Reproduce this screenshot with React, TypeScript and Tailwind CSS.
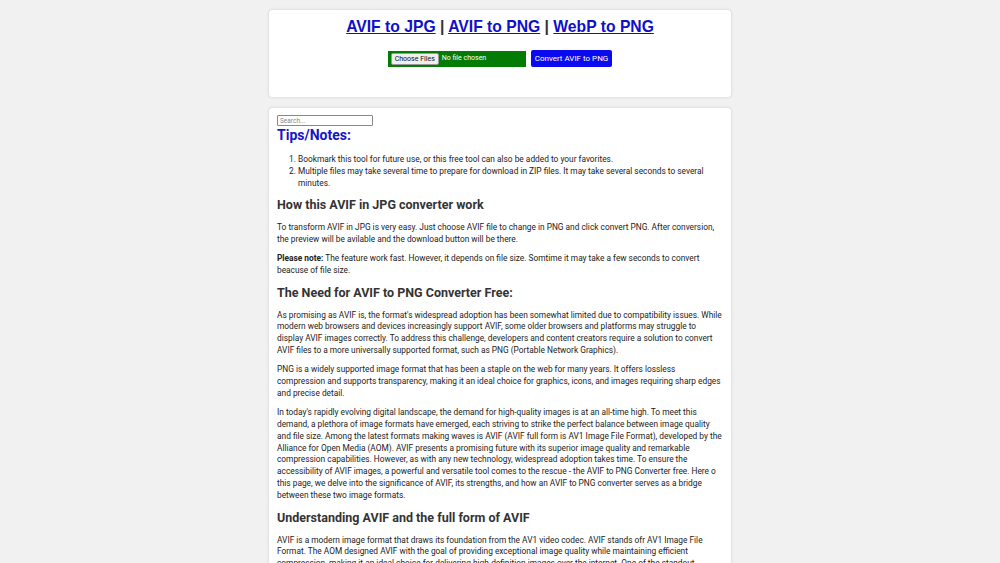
const body = "font-['Roboto',sans-serif]";

function Card({ children, className = '' }: { children: React.ReactNode; className?: string }) {
  return (
    <div className={`rounded-[4px] border border-[#e3e3e3] bg-white shadow-[0_0_3px_rgba(0,0,0,0.06)] ${className}`}>
      {children}
    </div>
  );
}

function H2({ children }: { children: React.ReactNode }) {
  return <h2 className="mt-[8px] mb-[9px] text-[12.5px] font-bold leading-[16px] text-[#333]">{children}</h2>;
}

function P({ children }: { children: React.ReactNode }) {
  return <p className="mb-[7.5px] text-[8.33px] leading-[11.8px] text-[#222]">{children}</p>;
}

export default function App() {
  return (
    <div className={`min-h-screen bg-[#f1f1f1] pt-[9px] ${body}`}>
      <div className="mx-auto flex w-[464px] flex-col gap-[9px]">
        <Card className="h-[89px] pt-[6px]">
          <h1 className="text-center font-['Liberation_Sans',Arial,sans-serif] text-[15.7px] font-bold leading-[22px] text-[#333]">
            <a href="#" className="text-[#1010c8] underline">AVIF to JPG</a>
            {' | '}
            <a href="#" className="text-[#1010c8] underline">AVIF to PNG</a>
            {' | '}
            <a href="#" className="text-[#1010c8] underline">WebP to PNG</a>
          </h1>
          <div className="mt-[12px] flex items-center justify-center gap-[5px]">
            <div className="flex h-[16px] w-[138px] items-center bg-[#047c04] pl-[3px]">
              <span className="rounded-[2px] border border-[#999] bg-[#efefef] px-[3px] text-[7px] leading-[10px] text-[#111]">
                Choose Files
              </span>
              <span className="ml-[3px] text-[7px] text-white">No file chosen</span>
            </div>
            <button className="h-[17px] rounded-[2px] bg-[#0a0af0] px-[4px] text-[8px] font-normal text-white">
              Convert AVIF to PNG
            </button>
          </div>
        </Card>

        <Card className="px-[8px] pt-[7px] pb-[10px]">
          <input
            placeholder="Search..."
            className="block h-[11px] w-[96px] rounded-[1px] border border-[#888] px-[2px] text-[6.5px] placeholder:text-[#888]"
          />
          <h3 className="mt-[1px] text-[14px] font-bold leading-[17px] text-[#1515c4]">Tips/Notes:</h3>
          <ol className="mt-[9px] mb-[8px] list-decimal pl-[21px] text-[8.33px] leading-[12px] text-[#222]">
            <li>Bookmark this tool for future use, or this free tool can also be added to your favorites.</li>
            <li>
              Multiple files may take several time to prepare for download in ZIP files. It may take several seconds to
              several minutes.
            </li>
          </ol>
          <H2>How this AVIF in JPG converter work</H2>
          <P>
            To transform AVIF in JPG is very easy. Just choose AVIF file to change in PNG and click convert PNG. After
            conversion, the preview will be avilable and the download button will be there.
          </P>
          <P>
            <strong>Please note:</strong> The feature work fast. However, it depends on file size. Somtime it may take a
            few seconds to convert beacuse of file size.
          </P>
          <H2>The Need for AVIF to PNG Converter Free:</H2>
          <P>
            As promising as AVIF is, the format's widespread adoption has been somewhat limited due to compatibility
            issues. While modern web browsers and devices increasingly support AVIF, some older browsers and platforms
            may struggle to display AVIF images correctly. To address this challenge, developers and content creators
            require a solution to convert AVIF files to a more universally supported format, such as PNG (Portable
            Network Graphics).
          </P>
          <P>
            PNG is a widely supported image format that has been a staple on the web for many years. It offers lossless
            compression and supports transparency, making it an ideal choice for graphics, icons, and images requiring
            sharp edges and precise detail.
          </P>
          <P>
            In today's rapidly evolving digital landscape, the demand for high-quality images is at an all-time high. To
            meet this demand, a plethora of image formats have emerged, each striving to strike the perfect balance
            between image quality and file size. Among the latest formats making waves is AVIF (AVIF full form is AV1
            Image File Format), developed by the Alliance for Open Media (AOM). AVIF presents a promising future with its
            superior image quality and remarkable compression capabilities. However, as with any new technology,
            widespread adoption takes time. To ensure the accessibility of AVIF images, a powerful and versatile tool
            comes to the rescue - the AVIF to PNG Converter free. Here o this page, we delve into the significance of
            AVIF, its strengths, and how an AVIF to PNG converter serves as a bridge between these two image formats.
          </P>
          <H2>Understanding AVIF and the full form of AVIF</H2>
          <P>
            AVIF is a modern image format that draws its foundation from the AV1 video codec. AVIF stands ofr AV1 Image
            File Format. The AOM designed AVIF with the goal of providing exceptional image quality while maintaining
            efficient compression, making it an ideal choice for delivering high-definition images over the internet.
            One of the standout features of AVIF is its ability to deliver high-quality images at significantly smaller
            file sizes compared to older formats like JPEG and PNG.
          </P>
        </Card>
      </div>
    </div>
  );
}
